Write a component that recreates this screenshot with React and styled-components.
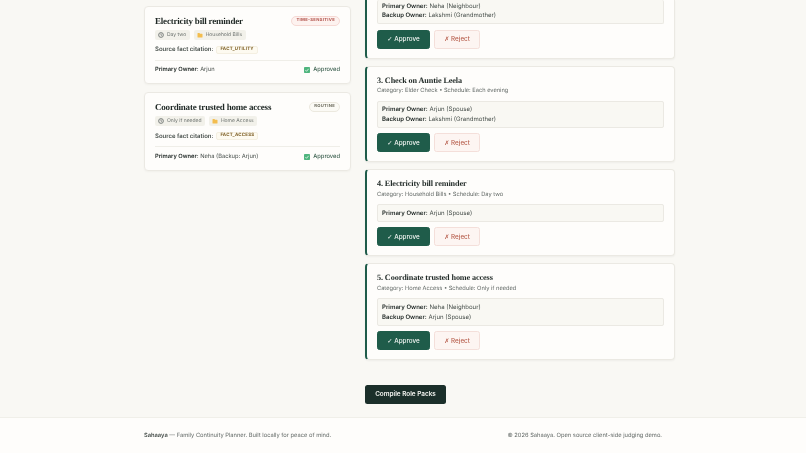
import React from "react";
import styled, { createGlobalStyle } from "styled-components";

const Global = createGlobalStyle`
  html, body { margin: 0; padding: 0; background: #f9f8f4; }
  body { font-family: Inter, "Liberation Sans", sans-serif; color: #2c3330; height: 453px; overflow: hidden; text-rendering: geometricPrecision; }
`;
const Page = styled.div`display: flex; flex-direction: column; height: 453px; filter: blur(0.3px);`;
const Main = styled.main`
  flex: 1; display: grid; grid-template-columns: 207px 310px; column-gap: 14px;
  align-items: start; padding-left: 144px;
`;
const LeftCol = styled.div`display: flex; flex-direction: column; gap: 8px; padding-top: 5.7px;`;
const SummaryCard = styled.article`
  background: #fefdfb; border: 1px solid #ebe9e3; border-radius: 4px;
  padding: 9px 10px 9px; box-shadow: 0 1px 2px rgba(40,40,30,.04);
`;
const TitleRow = styled.div`display: flex; justify-content: space-between; align-items: center; height: 10px;`;
const Title = styled.h3`
  margin: 0; font-family: "Liberation Serif", serif; font-weight: 700; font-size: 9px; color: #1f2825; letter-spacing: -.2px;
`;
const Urgency = styled.span`
  font-size: 4.2px; font-weight: 700; letter-spacing: .3px; line-height: 8px; padding: 0 4px; border-radius: 6px;
  border: 1px solid ${p => p.$urgent ? "#f6d9d4" : "#ece9df"};
  background: ${p => p.$urgent ? "#fdf2ef" : "#fbfaf5"}; color: ${p => p.$urgent ? "#b2524a" : "#6b6a5c"};
`;
const ChipRow = styled.div`display: flex; gap: 3.7px; margin-top: 4.3px;`;
const Chip = styled.span`
  display: inline-flex; align-items: center; gap: 3px; height: 10px; padding: 0 3.7px 0 3px; border-radius: 2px;
  background: #f2f1ea; font-size: 5px; color: #6c726e;
`;
const CitationRow = styled.div`display: flex; align-items: center; gap: 3px; height: 8px; margin-top: 6px; font-size: 6px; font-weight: 600; color: #454d49;`;
const Citation = styled.code`
  font-family: Inter, sans-serif; font-size: 4.4px; font-weight: 700; letter-spacing: .25px; color: #7a5b20;
  background: #fdfaf0; border: 1px solid #f4efe1; border-radius: 2px; line-height: 6px; padding: 0 3px;
`;
const SummaryFoot = styled.div`
  display: flex; justify-content: space-between; align-items: center; margin-top: 5.7px; padding-top: 5.5px; line-height: 8px;
  border-top: 1px solid #efeee8; font-size: 5.75px; color: #464e4a;
`;
const Strong = styled.strong`font-weight: 600; color: #232b28;`;
const Status = styled.span`display: inline-flex; align-items: center; gap: 3.5px; font-weight: 500; color: #3d6150;`;
const RightCol = styled.div`display: flex; flex-direction: column; gap: 7px;`;
const Plan = styled.article`
  background: #fefdfb; border: 1px solid #ebe9e3; border-left: 2px solid #1f5c4a; border-radius: 4px; padding: 8px 10px 9px;
  box-shadow: 0 1px 2px rgba(40,40,30,.05);
  ${p => p.$clipped && "border-top: 0; border-top-left-radius: 0; border-top-right-radius: 0; padding-top: 0;"}
`;
const PlanTitle = styled.h4`
  margin: 0; font-family: "Liberation Serif", serif; font-weight: 700; font-size: 8.2px; line-height: 11px; color: #1f2825; letter-spacing: -.11px;
`;
const Meta = styled.p`margin: .5px 0 0; font-size: 5.7px; line-height: 10px; color: #626966;`;
const Owners = styled.div`
  margin-top: 4.5px; padding: 3.5px 4px 2.5px; background: #f9f8f3; border: 1px solid #ebe9e3; border-radius: 2px;
  font-size: 6.05px; line-height: 9.6px; color: #464e4a;
  ${p => p.$clipped && "margin-top: 0; border-top: 0; padding-top: 1.5px;"}
`;
const Actions = styled.div`display: flex; gap: 4px; margin-top: 5.5px;`;
const ActionButton = styled.button`
  box-sizing: border-box; height: 19px; width: ${p => p.$w}px; padding: 0; border-radius: 2.5px; font-family: inherit; font-size: 6.3px; font-weight: 500;
  border: 1px solid ${p => p.$primary ? "#1f5c4a" : "#f4dfda"};
  background: ${p => p.$primary ? "#1f5c4a" : "#fdf5f2"}; color: ${p => p.$primary ? "#f4f7f4" : "#b8604f"};
`;
const Mark = styled.span`font-family: "DejaVu Sans", sans-serif; font-weight: 400;`;
const Compile = styled.button`
  align-self: flex-start; box-sizing: border-box; margin-top: 17.8px; width: 81px; height: 19px; padding: 0; border: 0; border-radius: 2.5px;
  background: #1b2f2a; color: #f4f5f1; font-family: inherit; font-size: 6.4px; font-weight: 600;
`;
const Footer = styled.footer`
  box-sizing: border-box; height: 36px; flex: none; background: #fefdfb; border-top: 1px solid #f0efe9;
  display: flex; justify-content: space-between; align-items: center; padding: 0 144px; font-size: 5.75px; color: #626966;
`;
const Brand = styled.strong`font-weight: 600; color: #464e4a;`;

const ClockIcon = () => (
  <svg width="6" height="6" viewBox="0 0 12 12"><circle cx="6" cy="6" r="4.8" fill="#e8e7e1" stroke="#5f6663" strokeWidth="1.5" /><path d="M6 3.2V6l2 1.2" fill="none" stroke="#5f6663" strokeWidth="1.2" /></svg>
);
const FolderIcon = () => (
  <svg width="6" height="6" viewBox="0 0 12 12"><path d="M1 3a1 1 0 0 1 1-1h3l1 1.5h4a1 1 0 0 1 1 1V10a1 1 0 0 1-1 1H2a1 1 0 0 1-1-1Z" fill="#f3bd4e" /></svg>
);
const CheckIcon = () => (
  <svg width="6" height="6" viewBox="0 0 12 12"><rect width="12" height="12" rx="1.5" fill="#4fb57e" /><path d="M2.8 6.2 5.1 8.6 9.3 3.6" fill="none" stroke="#eef8f1" strokeWidth="1.6" /></svg>
);

const summaries = [
  { title: "Electricity bill reminder", tag: "TIME-SENSITIVE", urgent: true, when: "Day two", cat: "Household Bills", fact: "FACT_UTILITY", owner: "Arjun" },
  { title: "Coordinate trusted home access", tag: "ROUTINE", when: "Only if needed", cat: "Home Access", fact: "FACT_ACCESS", owner: "Neha (Backup: Arjun)" },
];
const plans = [
  { title: "3. Check on Auntie Leela", meta: "Category: Elder Check • Schedule: Each evening", primary: "Arjun (Spouse)", backup: "Lakshmi (Grandmother)" },
  { title: "4. Electricity bill reminder", meta: "Category: Household Bills • Schedule: Day two", primary: "Arjun (Spouse)" },
  { title: "5. Coordinate trusted home access", meta: "Category: Home Access • Schedule: Only if needed", primary: "Neha (Neighbour)", backup: "Arjun (Spouse)" },
];
const Buttons = () => (
  <Actions>
    <ActionButton $primary $w={53}><Mark>✓</Mark> Approve</ActionButton>
    <ActionButton $w={46}><Mark>✗</Mark> Reject</ActionButton>
  </Actions>
);

export default function App() {
  return (
    <Page>
      <Global />
      <Main>
        <LeftCol>
          {summaries.map(s => (
            <SummaryCard key={s.title}>
              <TitleRow><Title>{s.title}</Title><Urgency $urgent={s.urgent}>{s.tag}</Urgency></TitleRow>
              <ChipRow>
                <Chip><ClockIcon />{s.when}</Chip>
                <Chip><FolderIcon />{s.cat}</Chip>
              </ChipRow>
              <CitationRow>Source fact citation: <Citation>{s.fact}</Citation></CitationRow>
              <SummaryFoot>
                <span><Strong>Primary Owner:</Strong> {s.owner}</span>
                <Status><CheckIcon />Approved</Status>
              </SummaryFoot>
            </SummaryCard>
          ))}
        </LeftCol>
        <RightCol>
          <Plan $clipped>
            <Owners $clipped>
              <div><Strong>Primary Owner:</Strong> Neha (Neighbour)</div>
              <div><Strong>Backup Owner:</Strong> Lakshmi (Grandmother)</div>
            </Owners>
            <Buttons />
          </Plan>
          {plans.map(p => (
            <Plan key={p.title}>
              <PlanTitle>{p.title}</PlanTitle>
              <Meta>{p.meta}</Meta>
              <Owners>
                <div><Strong>Primary Owner:</Strong> {p.primary}</div>
                {p.backup && <div><Strong>Backup Owner:</Strong> {p.backup}</div>}
              </Owners>
              <Buttons />
            </Plan>
          ))}
          <Compile>Compile Role Packs</Compile>
        </RightCol>
      </Main>
      <Footer>
        <span><Brand>Sahaaya</Brand> — Family Continuity Planner. Built locally for peace of mind.</span>
        <span>© 2026 Sahaaya. Open source client-side judging demo.</span>
      </Footer>
    </Page>
  );
}
